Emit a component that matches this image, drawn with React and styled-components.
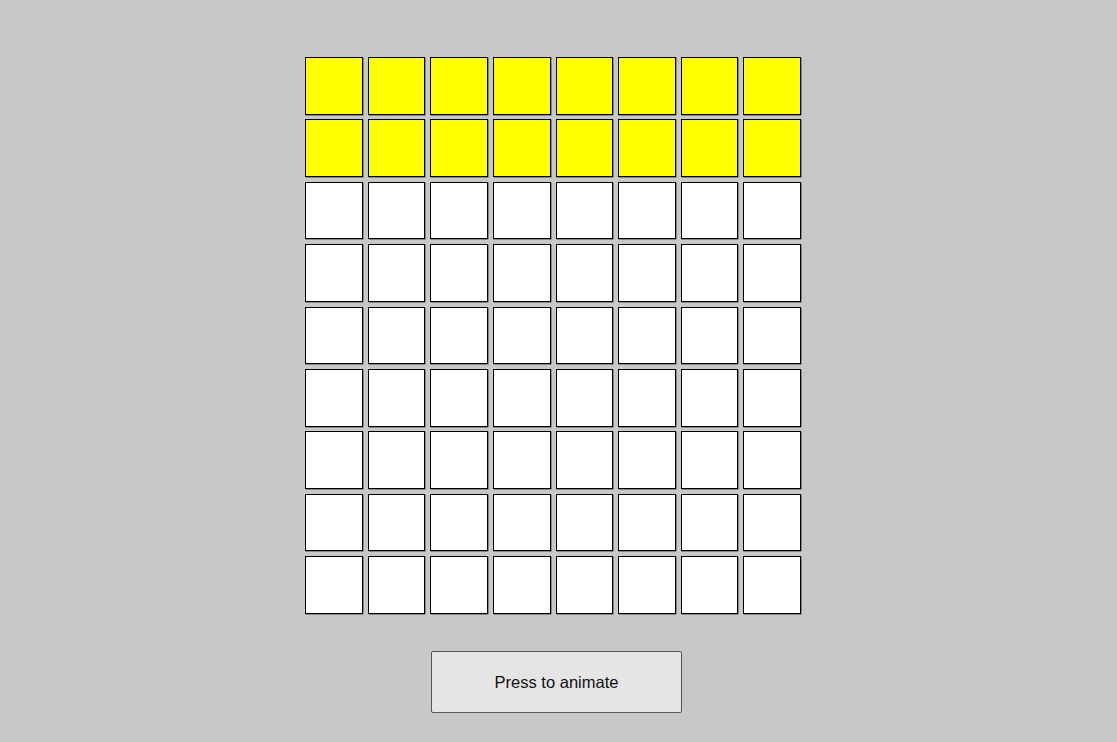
import styled, { createGlobalStyle } from "styled-components";

const GlobalStyle = createGlobalStyle`
	html, body {
		margin: 0;
		padding: 0;
		background-color: #c8c8c8;
		font-family: "Liberation Sans", Arial, sans-serif;
	}
`;

const Page = styled.div`
	min-height: 742px;
	display: flex;
	flex-direction: column;
	align-items: center;
	padding: 57px 11px 0 0;
	box-sizing: border-box;
`;

const Board = styled.div`
	display: grid;
	grid-template-columns: repeat(8, 57.6px);
	grid-auto-rows: 57.6px;
	gap: 4.8px 5px;
`;

const Cell = styled.div`
	box-sizing: border-box;
	border: 1px solid #000;
	box-shadow: 0.5px 0.5px 0 #444;
	background-color: ${(props) => (props.$lit ? "#ffff00" : "#ffffff")};
`;

const AnimateButton = styled.button`
	margin: 37px 0 0 7px;
	width: 251px;
	height: 62px;
	padding-top: 2px;
	background-color: #e5e5e5;
	border: 1px solid #555;
	border-radius: 2px;
	font-family: "Liberation Sans", Arial, sans-serif;
	font-size: 16.5px;
	color: #111;
	cursor: pointer;
`;

const ROWS = 9;
const COLS = 8;
const LIT_ROWS = 2;

const App = () => {
	const cells = [];
	for (let r = 0; r < ROWS; r++) {
		for (let c = 0; c < COLS; c++) {
			cells.push(<Cell key={r + "-" + c} $lit={r < LIT_ROWS} />);
		}
	}

	return (
		<>
			<GlobalStyle />
			<Page>
				<Board>{cells}</Board>
				<AnimateButton>Press to animate</AnimateButton>
			</Page>
		</>
	);
};

export default App;
